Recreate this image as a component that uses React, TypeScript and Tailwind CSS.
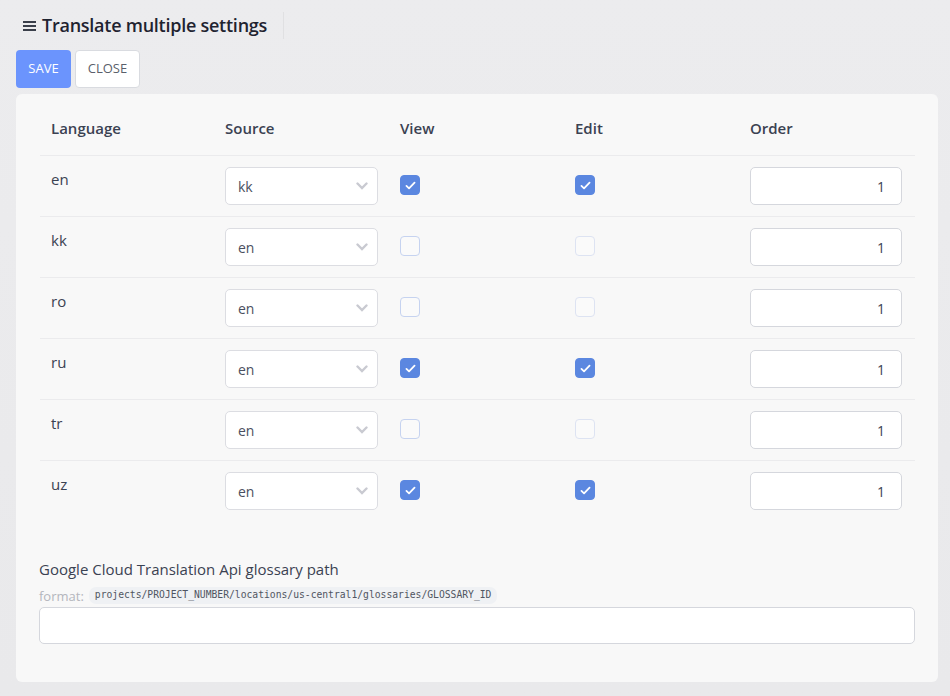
import { useState } from "react";

const SOURCES = ["en", "kk", "ro", "ru", "tr", "uz"];

type Row = { lang: string; source: string; view: boolean; edit: boolean; order: number };

const INITIAL: Row[] = [
  { lang: "en", source: "kk", view: true, edit: true, order: 1 },
  { lang: "kk", source: "en", view: false, edit: false, order: 1 },
  { lang: "ro", source: "en", view: false, edit: false, order: 1 },
  { lang: "ru", source: "en", view: true, edit: true, order: 1 },
  { lang: "tr", source: "en", view: false, edit: false, order: 1 },
  { lang: "uz", source: "en", view: true, edit: true, order: 1 },
];

function Checkbox({ checked, disabled, onChange }: { checked: boolean; disabled?: boolean; onChange: () => void }) {
  return (
    <button
      type="button"
      onClick={onChange}
      disabled={disabled}
      className={
        checked
          ? "w-5 h-5 rounded-[4px] bg-[#5b87e0] border border-[#5b87e0] flex items-center justify-center"
          : disabled
            ? "w-5 h-5 rounded-[4px] bg-[#fafafa] border border-[#dde3f2]"
            : "w-5 h-5 rounded-[4px] bg-[#fafafa] border border-[#c6d3f0]"
      }
    >
      {checked && (
        <svg width="13" height="13" viewBox="0 0 16 16" fill="none">
          <path d="M3 8.5l3.2 3L13 4.5" stroke="white" strokeWidth="2.2" strokeLinecap="round" strokeLinejoin="round" />
        </svg>
      )}
    </button>
  );
}

export default function App() {
  const [rows, setRows] = useState<Row[]>(INITIAL);
  const [glossary, setGlossary] = useState("");

  function update(i: number, patch: Partial<Row>) {
    setRows((r) => r.map((row, idx) => (idx === i ? { ...row, ...patch } : row)));
  }

  return (
    <div
      className="min-h-[696px] bg-gradient-to-b from-[#ececee] to-[#e9e9eb] pl-4 pr-3 pt-3 pb-[14px] text-[#3b4252]"
      style={{ fontFamily: '"Open Sans", "Noto Sans", sans-serif' }}
    >
      <div className="flex">
        <div className="flex items-center gap-[5px] pl-[7px] pr-4 h-[27px] border-r border-[#e0e0e2]">
          <svg width="14" height="12" viewBox="0 0 14 12" className="mt-[1px]">
            <rect x="0" y="1" width="13" height="2" fill="#3a3f4a" />
            <rect x="0" y="5" width="13" height="2" fill="#3a3f4a" />
            <rect x="0" y="9" width="13" height="2" fill="#3a3f4a" />
          </svg>
          <h1 className="text-[18px] font-semibold text-[#1f2330] tracking-[-0.25px]">Translate multiple settings</h1>
        </div>
      </div>

      <div className="flex gap-1 mt-[11px]">
        <button className="h-[38px] w-[55px] rounded-[4px] bg-[#6b94fd] text-white text-[13px]">SAVE</button>
        <button className="h-[38px] w-[65px] rounded-[4px] bg-white border border-[#d9dbe0] text-[#5a5f6b] text-[13px]">
          CLOSE
        </button>
      </div>

      <div className="mt-[6px] bg-[#f8f8f8] rounded-[6px] pt-[10px] pl-6 pr-[23px] pb-[38px]">
        <div className="grid grid-cols-5 border-b border-[#ebebed] h-[52px] text-[15px] font-semibold">
          <div className="pl-[11px] pt-[12px] leading-6">Language</div>
          <div className="pl-[10px] pt-[12px] leading-6">Source</div>
          <div className="pl-[10px] pt-[12px] leading-6">View</div>
          <div className="pl-[10px] pt-[12px] leading-6">Edit</div>
          <div className="pl-[10px] pt-[12px] leading-6">Order</div>
        </div>

        {rows.map((row, i) => (
          <div
            key={row.lang}
            className={
              i < rows.length - 1
                ? "grid grid-cols-5 h-[61px] border-b border-[#ebebed] text-[15px]"
                : "grid grid-cols-5 h-[61px] text-[15px]"
            }
          >
            <div className="pl-[11px] pt-[11px] leading-6">{row.lang}</div>
            <div className="pl-[10px] pt-[11px]">
              <div className="relative w-[153px]">
                <select
                  value={row.source}
                  onChange={(e) => update(i, { source: e.target.value })}
                  className="appearance-none w-full h-[38px] pl-3 bg-white border border-[#dcdde2] rounded-[5px] text-[14px] text-[#4a5060] outline-none"
                >
                  {SOURCES.map((s) => (
                    <option key={s} value={s}>
                      {s}
                    </option>
                  ))}
                </select>
                <svg
                  width="12"
                  height="8"
                  viewBox="0 0 12 8"
                  className="absolute right-[10px] top-[15px] pointer-events-none"
                >
                  <path d="M1.5 1.5L6 6l4.5-4.5" stroke="#c9cad1" strokeWidth="2.4" fill="none" strokeLinecap="round" />
                </svg>
              </div>
            </div>
            <div className="pl-[10px] pt-[19px]">
              <Checkbox checked={row.view} onChange={() => update(i, { view: !row.view, edit: row.view ? false : row.edit })} />
            </div>
            <div className="pl-[10px] pt-[19px]">
              <Checkbox checked={row.edit} disabled={!row.view} onChange={() => update(i, { edit: !row.edit })} />
            </div>
            <div className="pl-[10px] pt-[11px]">
              <input
                type="text"
                value={row.order}
                onChange={(e) => update(i, { order: Number(e.target.value) || 0 })}
                className="w-[152px] h-[38px] pr-4 text-right bg-white border border-[#d5d7dd] rounded-[5px] text-[14px] text-[#3b4252] outline-none"
              />
            </div>
          </div>
        ))}

        <div className="mt-[37px] text-[15px] text-[#3b4252] leading-5 -mx-[1px]">Google Cloud Translation Api glossary path</div>
        <div className="flex items-center gap-[5px] mt-[8px] -mx-[1px]">
          <span className="text-[13px] text-[#b4b6bd] leading-4">format:</span>
          <code
            className="px-[6px] h-[17px] flex items-center rounded-[7px] bg-[#eff1f4] text-[9.7px] text-[#4f5561]"
            style={{ fontFamily: '"DejaVu Sans Mono", "Liberation Mono", monospace' }}
          >
            projects/PROJECT_NUMBER/locations/us-central1/glossaries/GLOSSARY_ID
          </code>
        </div>
        <input
          value={glossary}
          onChange={(e) => setGlossary(e.target.value)}
          className="block w-[876px] -ml-[1px] h-[37px] mt-[3px] bg-white border border-[#d5d7dd] rounded-[5px] px-3 text-[14px] outline-none"
        />
      </div>
    </div>
  );
}
